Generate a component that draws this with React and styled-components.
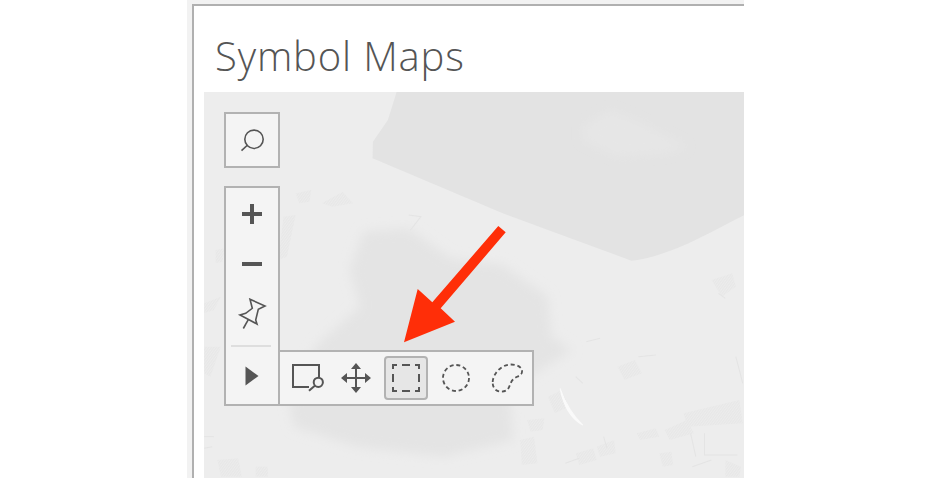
import React from 'react';
import styled, { createGlobalStyle } from 'styled-components';

const Global = createGlobalStyle`
  html, body { margin: 0; padding: 0; background: #fff; overflow: hidden; }
  #root { width: 932px; height: 478px; overflow: hidden; }
`;
const Page = styled.div`
  width: 932px; height: 478px; padding-left: 187px; box-sizing: border-box; overflow: hidden;
`;
const Frame = styled.div`
  width: 557px; height: 478px; box-sizing: border-box; padding: 4px 0 0 5px; background: #f2f2f2;
`;
const Card = styled.section`
  width: 552px; height: 474px; box-sizing: border-box; overflow: hidden; background: #fff;
  border-top: 2px solid #b0b0b0; border-left: 2px solid #b0b0b0;
  padding-left: 10px; display: flex; flex-direction: column;
`;
const Title = styled.h1`
  margin: 0 0 0 11px; height: 86px; box-sizing: border-box; padding-top: 25px;
  font-family: "Open Sans", sans-serif; font-weight: 300; font-size: 40px; line-height: 50px;
  color: #555; letter-spacing: 0.85px; white-space: nowrap;
`;
const MapArea = styled.div`
  position: relative; flex: 1; background: #ededed; overflow: hidden;
`;
const MapArt = styled.svg`
  display: block; width: 540px; height: 386px;
`;
const Controls = styled.div`
  position: absolute; left: 20px; top: 20px; width: 56px;
  display: flex; flex-direction: column; gap: 18px;
`;
const Panel = styled.div`
  position: relative; width: 56px; box-sizing: border-box; background: #f4f4f4;
  border: 2px solid #b2b2b2; display: flex; flex-direction: column; align-items: center;
`;
const SearchPanel = styled(Panel)`
  height: 56px; justify-content: center;
`;
const ZoomPanel = styled(Panel)`
  height: 220px; padding-top: 1px;
`;
const Btn = styled.div`
  width: 52px; height: ${p => p.$h}px; display: flex; align-items: center; justify-content: center;
  flex: none;
`;
const Divider = styled.div`
  width: 40px; height: 2px; background: #dedede; margin: 6px 0 0 -3px; flex: none;
`;
const Flyout = styled.div`
  position: absolute; left: 52px; bottom: -2px; width: 256px; height: 56px; box-sizing: border-box;
  background: #f4f4f4; border: 2px solid #b2b2b2; padding-left: 7px;
  display: grid; grid-template-columns: 46px 46px 54px 46px 44px; align-items: center;
`;
const Tool = styled.div`
  height: 44px; display: flex; align-items: center; justify-content: center;
`;
const ActiveTool = styled.div`
  width: 44px; height: 44px; box-sizing: border-box; margin: 0 auto;
  background: #e6e6e6; border: 2px solid #b2b2b2; border-radius: 4px;
  display: flex; align-items: center; justify-content: center;
`;
const ArrowLayer = styled.svg`
  position: absolute; left: 0; top: 0; width: 540px; height: 386px; pointer-events: none;
`;
const Ic = styled.svg`
  display: block; flex: none; fill: none; stroke: #555; stroke-width: 2;
`;

const SearchIcon = () => (
  <Ic width="24" height="24" viewBox="0 0 24 24" style={{ strokeWidth: 1.6 }}>
    <circle cx="14" cy="11.3" r="9.2" />
    <path d="M1.5 22.7 7.6 17" />
  </Ic>
);
const PlusIcon = () => (
  <Ic width="20" height="20" viewBox="0 0 20 20" style={{ strokeWidth: 4 }}><path d="M0 10H20M10 0V20" /></Ic>
);
const MinusIcon = () => (
  <Ic width="20" height="20" viewBox="0 0 20 20" style={{ strokeWidth: 4 }}><path d="M0 10H20" /></Ic>
);
const PinIcon = () => (
  <Ic width="32" height="32" viewBox="0 0 32 32" style={{ strokeWidth: 1.6 }}>
    <path d="M14 1.3 29 8 22.3 11.3 19.7 22 21 26 4 17 9.7 15.3 16.3 10.3Z" />
    <path d="M7.3 30.5 12.3 21.7" />
  </Ic>
);
const PlayIcon = () => (
  <svg width="14" height="20" viewBox="0 0 14 20" style={{ display: 'block' }}><path d="M0.5 0.5 13.5 10 0.5 19.5Z" fill="#555" /></svg>
);
const ZoomAreaIcon = () => (
  <Ic width="44" height="44" viewBox="0 0 44 44">
    <path d="M31 21.5V9H5V31H21" />
    <circle cx="30.3" cy="26.3" r="4.6" />
    <path d="M21 34.8 26.8 29.7" />
  </Ic>
);
const MoveIcon = () => (
  <Ic width="44" height="44" viewBox="0 0 44 44">
    <path d="M22 10V34M10 22H34" />
    <path d="M22 7 27 13H17ZM22 37 27 31H17ZM7 22 13 17V27ZM37 22 31 17V27Z" fill="#555" stroke="none" />
  </Ic>
);
const RectSelectIcon = () => (
  <Ic width="40" height="40" viewBox="0 0 40 40">
    <rect x="7" y="7" width="26" height="26" strokeDasharray="8 5" strokeDashoffset="4" />
  </Ic>
);
const CircleIcon = () => (
  <Ic width="44" height="44" viewBox="0 0 44 44" style={{ strokeWidth: 1.8 }}>
    <circle cx="22" cy="22" r="13" strokeDasharray="4 2.8" />
  </Ic>
);
const LassoIcon = () => (
  <Ic width="44" height="44" viewBox="0 0 44 44" style={{ strokeWidth: 1.8 }}>
    <path d="M13.7 26C14 18 22 8.5 32 8.5C38 8.5 43.5 11 43 16C42.5 20 37 20.5 34 23.5C31 26.5 31 31 28.5 33.5C26 36 20 36.5 17 34C14.5 32 13.5 29 13.7 26Z" strokeDasharray="4 2.8" />
  </Ic>
);

const detailPatches = [
  'M1470 570 1530 550 1540 590 1500 620Z', 'M1200 830 1250 810 1270 850 1220 870Z',
  'M1335 1020 1400 990 1420 1030 1350 1050Z', 'M1080 1090 1130 1075 1140 1110 1090 1125Z',
  'M1140 1070 1190 1050 1195 1090 1150 1100Z', 'M1390 970 1550 930 1560 1000 1400 1010Z',
  'M1000 920 1040 900 1060 950 1020 970Z', 'M1255 1030 1310 1015 1320 1040 1265 1050Z',
  'M1320 1090 1355 1085 1360 1125 1330 1130Z', 'M920 1050 960 1040 970 1120 925 1125Z',
  'M50 1110 110 1105 120 1160 60 1160Z', 'M160 1130 195 1130 195 1160 160 1160Z',
  'M12 770 60 770 30 860 12 850Z', 'M350 340 410 305 440 340 380 350Z', 'M275 310 320 300 315 335 285 340Z',
  'M240 380 275 375 250 500 225 510Z', 'M45 480 70 475 65 515 45 520Z', 'M12 640 60 620 40 660 12 670Z',
  'M940 990 990 985 985 1020 950 1025Z', 'M1510 1110 1555 1130 1550 1160 1510 1160Z',
];
const detailLines = [
  'M600 375 635 380 605 420', 'M1110 755 1150 745', 'M1260 800 1310 795', 'M1450 1030V1095H1545',
  'M1410 1030 1425 1100', 'M1160 1040 1170 1075', 'M1540 800 1560 880', 'M1080 860 1100 880', 'M1050 1120 1090 1105',
  'M12 1040 40 1040', 'M12 1075 35 1070', 'M1415 1130 1470 1110', 'M1490 610 1510 625',
];

const Base = () => (
  <MapArt viewBox="11.5 6 1552 1158" preserveAspectRatio="none" aria-hidden="true">
    <defs>
      <filter id="soft" x="-20%" y="-20%" width="140%" height="140%"><feGaussianBlur stdDeviation="14" /></filter>
      <filter id="soft2" x="-30%" y="-30%" width="160%" height="160%"><feGaussianBlur stdDeviation="16" /></filter>
      <pattern id="hatch" width="6" height="6" patternUnits="userSpaceOnUse" patternTransform="rotate(35)">
        <rect width="6" height="6" fill="#ececec" /><rect width="3" height="6" fill="#e7e7e7" />
      </pattern>
    </defs>
    <path d="M565 6 540 90 497 155 496 205 870 370 1240 512C1350 500 1460 430 1565 375V6Z" fill="#e3e3e3" />
    <path d="M1100 110 1180 60 1250 90 1400 170 1340 190 1200 200 1100 150Z" fill="#e6e6e6" filter="url(#soft)" />
    <path d="M470 425 600 415 720 505 870 525 1000 620 1010 740 1070 780 890 900 900 1050 700 1100 450 1070 270 1010 250 900 340 760 460 650 430 540Z" fill="#e4e4e4" filter="url(#soft2)" />
    <g fill="url(#hatch)">{detailPatches.map((d, i) => <path key={i} d={d} />)}</g>
    <g fill="none" stroke="#e4e4e4" strokeWidth="3">{detailLines.map((d, i) => <path key={i} d={d} />)}</g>
    <path d="M1035 895C1045 950 1065 985 1100 1005C1070 975 1050 940 1035 895Z" fill="#fafafa" stroke="#fafafa" strokeWidth="3" />
  </MapArt>
);

export default function App() {
  return (
    <Page>
      <Global />
      <Frame>
        <Card>
          <Title>Symbol Maps</Title>
          <MapArea>
            <Base />
            <Controls>
              <SearchPanel><SearchIcon /></SearchPanel>
              <ZoomPanel>
                <Btn $h={50}><PlusIcon /></Btn>
                <Btn $h={50}><MinusIcon /></Btn>
                <Btn $h={50}><PinIcon /></Btn>
                <Divider />
                <Btn $h={58}><PlayIcon /></Btn>
                <Flyout>
                  <Tool><ZoomAreaIcon /></Tool>
                  <Tool><MoveIcon /></Tool>
                  <ActiveTool><RectSelectIcon /></ActiveTool>
                  <Tool><CircleIcon /></Tool>
                  <Tool><LassoIcon /></Tool>
                </Flyout>
              </ZoomPanel>
            </Controls>
            <ArrowLayer viewBox="204 92 540 386" aria-hidden="true">
              <path d="M498.3 226 505.7 232.3 440.7 308.3 455 321.7 404 342.3 417.7 289 432.3 302.3Z" fill="#ff2e08" />
            </ArrowLayer>
          </MapArea>
        </Card>
      </Frame>
    </Page>
  );
}
